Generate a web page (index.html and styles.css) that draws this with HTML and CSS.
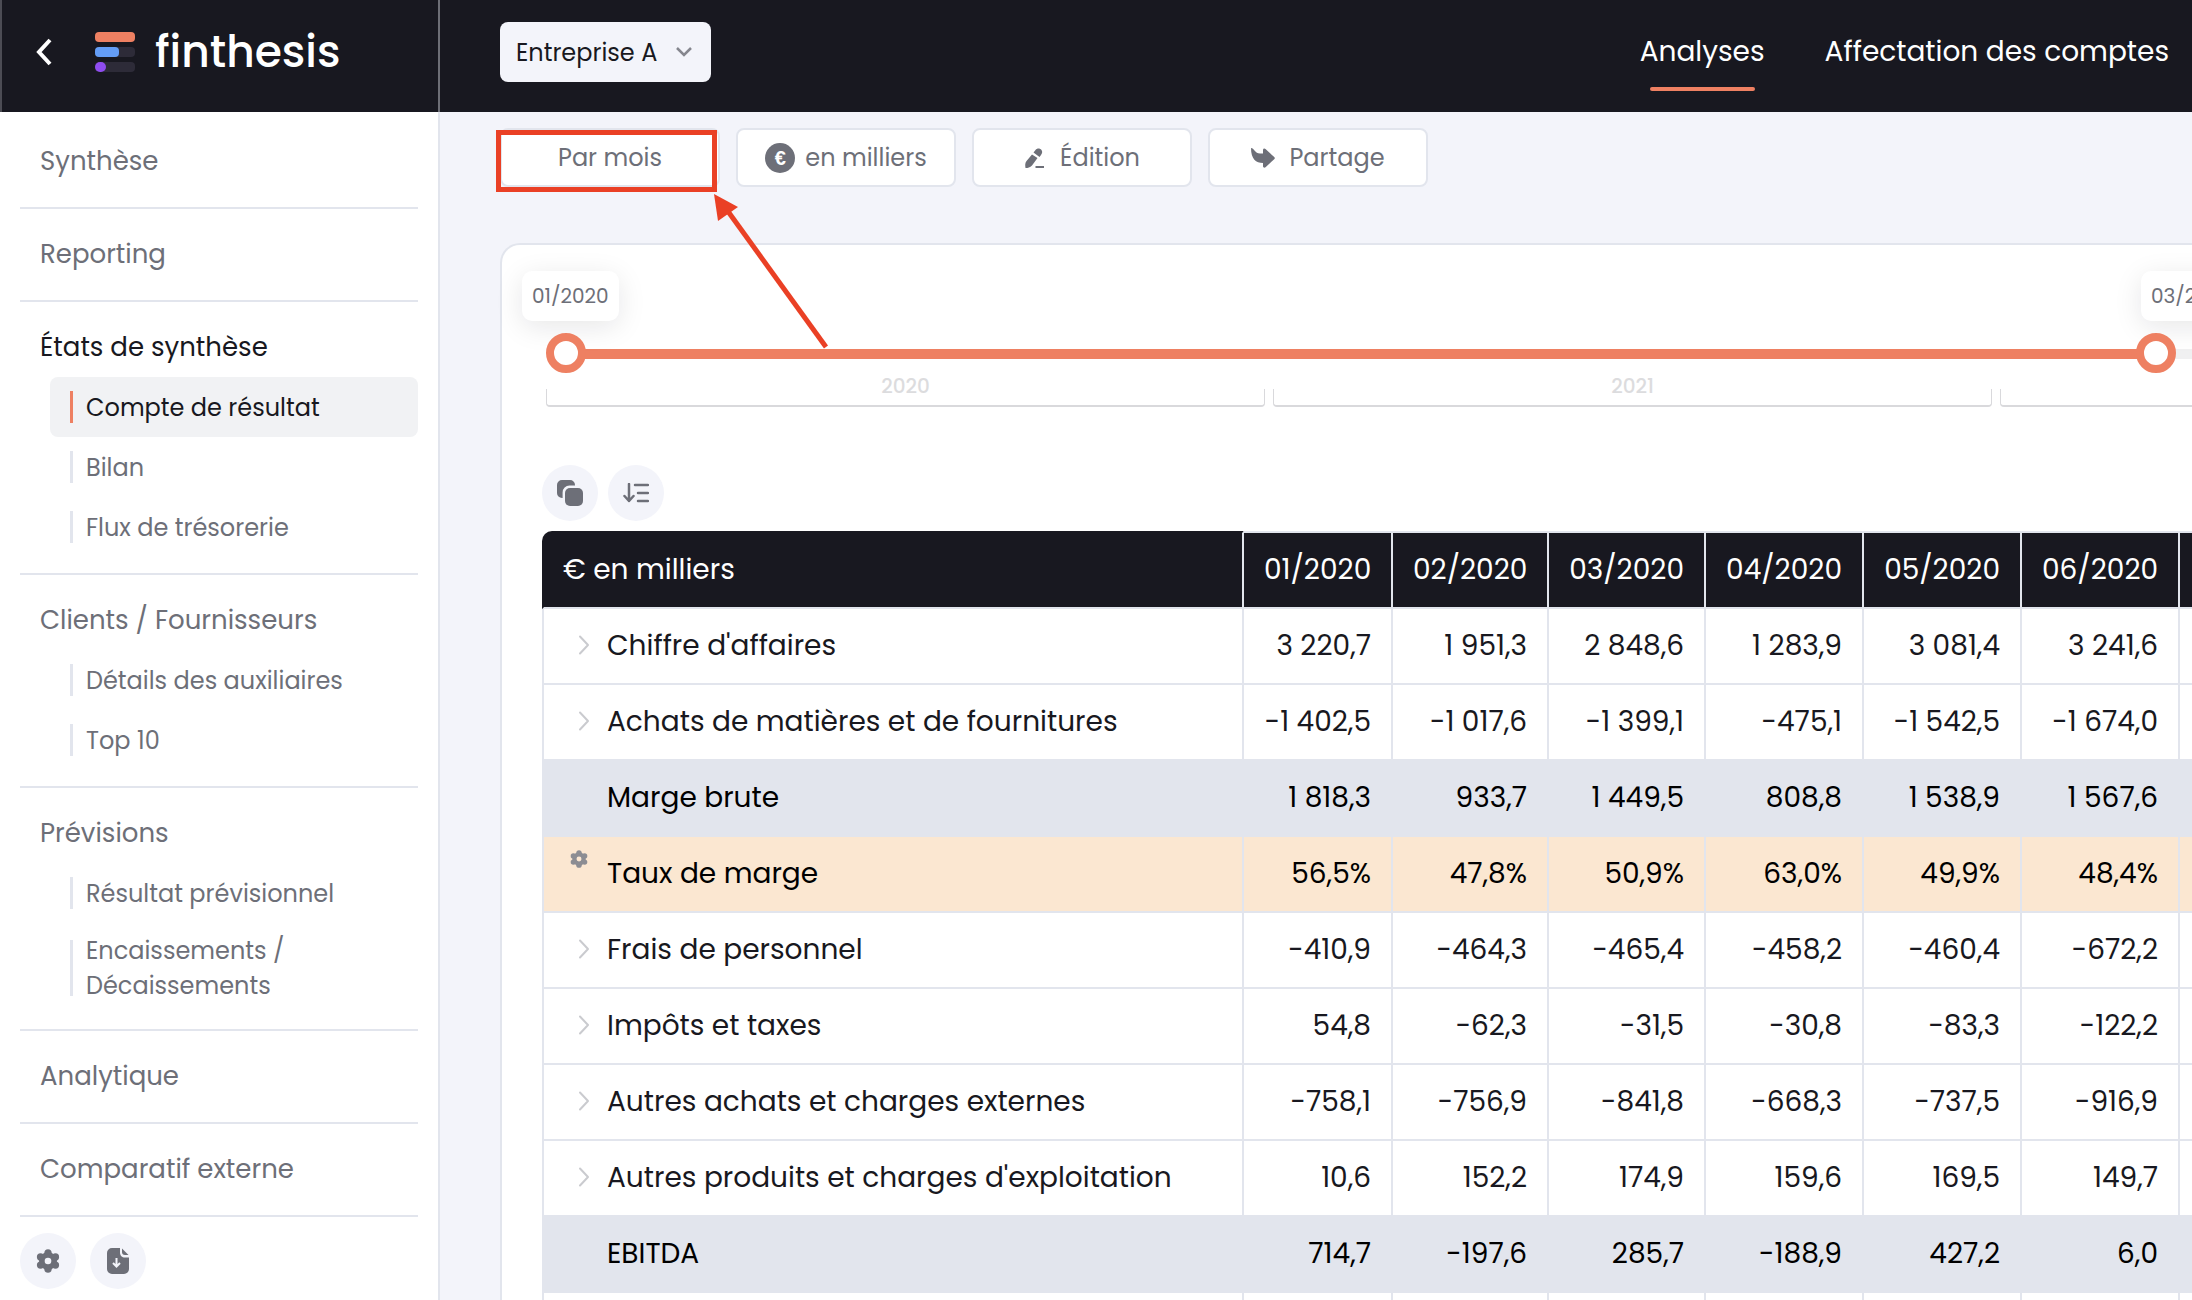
FILE: index.html
```html
<!DOCTYPE html>
<html lang="fr">
<head>
<meta charset="utf-8">
<meta name="viewport" content="width=device-width, initial-scale=1">
<title>finthesis</title>
<link rel="stylesheet" href="styles.css">
</head>
<body>
<svg class="sprite" aria-hidden="true">
  <mask id="gear-hole"><rect width="24" height="24" fill="#fff"/><circle cx="12" cy="12" r="3.300" fill="#000"/></mask>
  <symbol id="gear" viewBox="0 0 24 24">
    <g mask="url(#gear-hole)">
      <circle cx="12" cy="12" r="9"/>
      <circle cx="12" cy="3.800" r="3.600"/>
      <circle cx="19.500" cy="7.900" r="3.600"/>
      <circle cx="19.500" cy="16.100" r="3.600"/>
      <circle cx="12" cy="20.200" r="3.600"/>
      <circle cx="4.500" cy="16.100" r="3.600"/>
      <circle cx="4.500" cy="7.900" r="3.600"/>
    </g>
  </symbol>
  <symbol id="chevron" viewBox="0 0 12 20">
    <path d="M2 1.500 10 10l-8 8.500" fill="none" stroke="currentColor" stroke-width="2" stroke-linecap="round" stroke-linejoin="round"/>
  </symbol>
</svg>
<div class="app">
  <header class="topbar">
    <div class="brand">
      <button class="back" aria-label="Retour">
        <svg width="20" height="28" viewBox="0 0 20 28"><path d="M16 2 5 14l11 12" fill="none" stroke="#fff" stroke-width="4"/></svg>
      </button>
      <a class="logo" href="#">
        <svg width="40" height="40" viewBox="0 0 40 40">
          <rect width="40" height="10" rx="4" fill="#ee8062"/>
          <rect y="15" width="40" height="10" rx="4" fill="#2d2b38"/>
          <rect y="15" width="24" height="10" rx="4" fill="#649df6"/>
          <rect y="30" width="40" height="10" rx="4" fill="#2d2b38"/>
          <rect y="30" width="11" height="10" rx="5" fill="#8f4cf0"/>
        </svg>
        <span>finthesis</span>
      </a>
    </div>
    <div class="topbar-main">
      <div class="company">
        <select aria-label="Entreprise"><option>Entreprise A</option></select>
        <svg width="16" height="12" viewBox="0 0 16 12"><path d="m1 2 7 7 7-7" fill="none" stroke="#85868e" stroke-width="2.500"/></svg>
      </div>
      <nav class="tabs">
        <a class="tab tab-active" href="#">Analyses</a>
        <a class="tab" href="#">Affectation des comptes</a>
      </nav>
    </div>
  </header>

  <div class="body">
    <aside class="sidebar">
      <nav>
        <section class="group"><a class="group-title" href="#">Synthèse</a></section>
        <section class="group"><a class="group-title" href="#">Reporting</a></section>
        <section class="group">
          <a class="group-title current" href="#">États de synthèse</a>
          <a class="item item-active" href="#"><span>Compte de résultat</span></a>
          <a class="item" href="#"><span>Bilan</span></a>
          <a class="item" href="#"><span>Flux de trésorerie</span></a>
        </section>
        <section class="group">
          <a class="group-title" href="#">Clients / Fournisseurs</a>
          <a class="item" href="#"><span>Détails des auxiliaires</span></a>
          <a class="item" href="#"><span>Top 10</span></a>
        </section>
        <section class="group">
          <a class="group-title" href="#">Prévisions</a>
          <a class="item" href="#"><span>Résultat prévisionnel</span></a>
          <a class="item" href="#"><span>Encaissements /<br>Décaissements</span></a>
        </section>
        <section class="group"><a class="group-title" href="#">Analytique</a></section>
        <section class="group"><a class="group-title" href="#">Comparatif externe</a></section>
      </nav>
      <div class="rounds">
        <button class="round" aria-label="Paramètres"><svg width="24" height="24"><use href="#gear"/></svg></button>
        <button class="round" aria-label="Télécharger">
          <svg width="22" height="26" viewBox="0 0 22 26">
            <path d="M5 0h8v4.500C13 7.500 15 9.500 18 9.500h4V21a5 5 0 0 1-5 5H5a5 5 0 0 1-5-5V5a5 5 0 0 1 5-5z"/>
            <path d="M15 .5 21.500 7H18a3 3 0 0 1-3-3z"/>
            <path d="M9.500 10v8M6 15l3.500 3.500L13 15" fill="none" stroke="#f3f4fa" stroke-width="2"/>
          </svg>
        </button>
      </div>
    </aside>

    <main class="main">
      <div class="toolbar">
        <button class="tool tool-marked">Par mois
          <svg class="arrow" width="120" height="164" viewBox="0 0 120 164"><path d="M113 157 14 20" stroke="#ea4025" stroke-width="5"/><path d="M1 4 25 17 5 31z" fill="#ea4025"/></svg>
        </button>
        <button class="tool"><span class="euro">€</span>en milliers</button>
        <button class="tool tool-wide">
          <svg width="22" height="22" viewBox="0 0 22 22"><path d="M8 7.500 13.500 11 8 18.500C6 20.500 4 21 1.500 21 1 18 1 16 2.500 14zM9.500 5.500 11.500 3C13 1 16 1 17.500 3c1 1.500 1 3-.5 5l-1.500 2zM11.500 19H20v2h-8.500z"/></svg>
          Édition
        </button>
        <button class="tool tool-wide">
          <svg width="24" height="22" viewBox="1 0 24 22"><path d="M1 1c3 0 4 5.500 9 5.500h3V3c0-1.500 1.500-2 2.500-1l8.700 8c.8.700.8 1.600 0 2.300l-8.700 7.900c-1 .9-2.500.3-2.500-1V16C6 16 1 12 1 1z"/></svg>
          Partage
        </button>
      </div>

      <div class="card">
        <div class="slider">
          <div class="rail"><div class="fill"></div></div>
          <input class="range" type="range" min="0" max="100" value="0" aria-label="Début">
          <input class="range" type="range" min="0" max="100" value="99" aria-label="Fin">
          <output class="tip tip-start">01/2020</output>
          <output class="tip tip-end">03/2022</output>
        </div>
        <div class="years">
          <div class="year"><span>2020</span></div>
          <div class="year"><span>2021</span></div>
          <div class="year year-open"></div>
        </div>

        <div class="rounds">
          <button class="round" aria-label="Copier">
            <svg width="26" height="26" viewBox="0 0 26 26"><path d="M5 0h8a5 5 0 0 1 5 5v.6h-5.500A6.900 6.900 0 0 0 5.600 12.500V18H5a5 5 0 0 1-5-5V5a5 5 0 0 1 5-5z"/><rect x="8" y="8" width="18" height="18" rx="5"/></svg>
          </button>
          <button class="round" aria-label="Trier">
            <svg width="26" height="20" viewBox="0 0 26 20"><path d="M6 1v17M1.500 13 6 18l4.500-5M12 2h13M15 10h10M15 18h10" fill="none" stroke="currentColor" stroke-width="2.500" stroke-linecap="round" stroke-linejoin="round"/></svg>
          </button>
        </div>

        <table class="grid">
          <colgroup><col class="c-label"><col class="c-first"><col class="c-second"><col class="c-third"><col class="c"><col class="c"><col class="c"><col></colgroup>
          <thead>
            <tr><th scope="col">€ en milliers</th><th scope="col">01/2020</th><th scope="col">02/2020</th><th scope="col">03/2020</th><th scope="col">04/2020</th><th scope="col">05/2020</th><th scope="col">06/2020</th><td></td></tr>
          </thead>
          <tbody>
            <tr><th scope="row"><svg class="chev"><use href="#chevron"/></svg>Chiffre d'affaires</th><td>3 220,7</td><td>1 951,3</td><td>2 848,6</td><td>1 283,9</td><td>3 081,4</td><td>3 241,6</td><td></td></tr>
            <tr><th scope="row"><svg class="chev"><use href="#chevron"/></svg>Achats de matières et de fournitures</th><td>-1 402,5</td><td>-1 017,6</td><td>-1 399,1</td><td>-475,1</td><td>-1 542,5</td><td>-1 674,0</td><td></td></tr>
            <tr class="total"><th scope="row">Marge brute</th><td>1 818,3</td><td>933,7</td><td>1 449,5</td><td>808,8</td><td>1 538,9</td><td>1 567,6</td><td></td></tr>
            <tr class="ratio"><th scope="row"><svg class="cog"><use href="#gear"/></svg>Taux de marge</th><td>56,5%</td><td>47,8%</td><td>50,9%</td><td>63,0%</td><td>49,9%</td><td>48,4%</td><td></td></tr>
            <tr><th scope="row"><svg class="chev"><use href="#chevron"/></svg>Frais de personnel</th><td>-410,9</td><td>-464,3</td><td>-465,4</td><td>-458,2</td><td>-460,4</td><td>-672,2</td><td></td></tr>
            <tr><th scope="row"><svg class="chev"><use href="#chevron"/></svg>Impôts et taxes</th><td>54,8</td><td>-62,3</td><td>-31,5</td><td>-30,8</td><td>-83,3</td><td>-122,2</td><td></td></tr>
            <tr><th scope="row"><svg class="chev"><use href="#chevron"/></svg>Autres achats et charges externes</th><td>-758,1</td><td>-756,9</td><td>-841,8</td><td>-668,3</td><td>-737,5</td><td>-916,9</td><td></td></tr>
            <tr><th scope="row"><svg class="chev"><use href="#chevron"/></svg>Autres produits et charges d'exploitation</th><td>10,6</td><td>152,2</td><td>174,9</td><td>159,6</td><td>169,5</td><td>149,7</td><td></td></tr>
            <tr class="total"><th scope="row">EBITDA</th><td>714,7</td><td>-197,6</td><td>285,7</td><td>-188,9</td><td>427,2</td><td>6,0</td><td></td></tr>
            <tr><td></td><td></td><td></td><td></td><td></td><td></td><td></td><td></td></tr>
          </tbody>
        </table>
      </div>
    </main>
  </div>
</div>
</body>
</html>
```
FILE: styles.css
```css
:root {
  --dark: #181820;
  --grey: #6d6f78;
  --line: #e2e5ed;
  --pale: #f3f4fa;
  --orange: #ee8062;
  --mark: #ea4025;
}

* { box-sizing: border-box; }

body {
  margin: 0;
  background: var(--pale);
  color: var(--dark);
  font-family: Poppins, Inter, sans-serif;
  font-size: 24px;
}

a { color: inherit; text-decoration: none; }

button, select {
  border: 0;
  padding: 0;
  background: none;
  color: inherit;
  font: inherit;
}

.sprite {
  position: absolute;
  width: 0;
  height: 0;
}

.app {
  display: flex;
  flex-direction: column;
  height: 100vh;
  overflow: hidden;
}

/* Top bar */
.topbar {
  display: flex;
  flex: none;
  height: 112px;
  background: var(--dark);
  color: #fff;
}

.brand {
  display: flex;
  align-items: center;
  gap: 41px;
  width: 440px;
  padding: 0 0 8px 32px;
  border-left: 2px solid #4c4c54;
  border-right: 2px solid #6d6e76;
}

.back { display: flex; }

.logo {
  display: flex;
  align-items: center;
  gap: 20px;
  font-size: 44px;
  font-weight: 500;
  line-height: 56px;
}

.topbar-main {
  display: flex;
  flex: 1;
  align-items: center;
  justify-content: space-between;
  padding: 0 23px 8px 60px;
}

.company {
  display: grid;
  align-items: center;
  width: 211px;
}

.company > * { grid-area: 1 / 1; }

.company select {
  appearance: none;
  width: 100%;
  height: 60px;
  padding: 0 44px 0 16px;
  border-radius: 8px;
  background: var(--pale);
  color: var(--dark);
}

.company svg {
  justify-self: end;
  margin-right: 19px;
  pointer-events: none;
}

.tabs {
  display: flex;
  gap: 60px;
  font-size: 28px;
  line-height: 40px;
}

.tab { position: relative; }

.tab-active::after {
  content: "";
  position: absolute;
  inset: auto 10px -19px;
  height: 4px;
  border-radius: 2px;
  background: var(--orange);
}

.body {
  display: flex;
  flex: 1;
  min-height: 0;
}

/* Sidebar */
.sidebar {
  flex: none;
  width: 440px;
  padding: 4px 20px 0;
  border-right: 2px solid var(--line);
  background: #fff;
  color: var(--grey);
}

.group {
  padding-bottom: 16px;
  border-bottom: 2px solid var(--line);
}

.group-title {
  display: block;
  padding: 25px 20px 10px;
  font-size: 26px;
  line-height: 40px;
}

.current, .item-active { color: var(--dark); }

.item {
  display: block;
  margin-left: 30px;
  padding: 10px 20px;
  border-radius: 8px;
  line-height: 35px;
}

.item span {
  display: flex;
  align-items: center;
  min-height: 40px;
  padding-left: 16px;
  background: linear-gradient(var(--line), var(--line)) left center / 3px 80% no-repeat;
}

.item-active { background: #f1f2f4; }

.item-active span { background-image: linear-gradient(var(--orange), var(--orange)); }

.rounds {
  display: flex;
  gap: 10px;
}

.sidebar .rounds {
  gap: 14px;
  padding-top: 16px;
}

.round {
  display: flex;
  align-items: center;
  justify-content: center;
  width: 56px;
  height: 56px;
  border-radius: 50%;
  background: var(--pale);
  color: var(--grey);
}

.round svg, .tool svg { fill: currentColor; }

/* Content */
.main {
  display: flex;
  flex: 1;
  flex-direction: column;
  gap: 56px;
  min-width: 0;
  padding: 16px 0 0 60px;
}

.toolbar {
  display: flex;
  gap: 16px;
}

.tool {
  display: flex;
  align-items: center;
  justify-content: center;
  gap: 10px;
  width: 220px;
  height: 59px;
  border: 2px solid var(--line);
  border-radius: 8px;
  background: #fff;
  color: var(--grey);
}

.tool-wide { gap: 14px; }

.tool-marked { position: relative; }

.tool-marked::after {
  content: "";
  position: absolute;
  inset: 0 1px -7px -6px;
  border: 5px solid var(--mark);
}

.tool .arrow {
  position: absolute;
  z-index: 2;
  top: 60px;
  left: 211px;
}

.euro {
  width: 30px;
  height: 30px;
  border-radius: 50%;
  background: var(--grey);
  color: #fff;
  font-family: "Liberation Sans", sans-serif;
  font-size: 20px;
  font-weight: 700;
  line-height: 30px;
}

.card {
  flex: none;
  padding: 26px 0 0 40px;
  border: 2px solid var(--line);
  border-right: 0;
  border-radius: 20px 0 0 0;
  background: #fff;
}

/* Period slider */
.slider {
  position: relative;
  display: grid;
  margin-left: 4px;
  padding-top: 62px;
}

.slider > .rail, .slider > .range { grid-area: 1 / 1; }

.rail {
  align-self: center;
  height: 10px;
  margin: 2px 0 0 20px;
  background: #f0f0f1;
}

.fill {
  width: 98%;
  height: 10px;
  background: var(--orange);
}

.range {
  appearance: none;
  z-index: 1;
  width: 100%;
  height: 40px;
  margin: 0;
  background: none;
  pointer-events: none;
}

.range::-webkit-slider-thumb {
  appearance: none;
  width: 40px;
  height: 40px;
  border: 8px solid var(--orange);
  border-radius: 50%;
  background: #fff;
  pointer-events: auto;
}

.tip {
  position: absolute;
  top: 0;
  width: 97px;
  padding-left: 10px;
  border-radius: 10px;
  background: #fff;
  box-shadow: 0 6px 28px rgba(24, 24, 32, .1);
  color: var(--grey);
  font-size: 20px;
  line-height: 50px;
}

.tip-start { left: -24px; }
.tip-end { right: -46px; }

.years {
  display: grid;
  grid-template-columns: 45fr 45fr 12fr;
  gap: 8px;
  height: 34px;
  margin: 0 0 58px 4px;
  color: #dcdcde;
  font-size: 20px;
  font-weight: 500;
  line-height: 26px;
  text-align: center;
}

.year { display: grid; }

.year span { grid-area: 1 / 1; }

/* Bracket under each year */
.year::before {
  content: "";
  grid-area: 1 / 1;
  align-self: end;
  height: 16px;
  border: solid #d9d9dc;
  border-width: 0 1px 2px;
  border-radius: 0 0 4px 4px;
}

.year-open::before {
  border-right: 0;
  border-bottom-right-radius: 0;
}

/* Table */
.grid {
  width: 100%;
  margin-top: 10px;
  border-spacing: 0;
  table-layout: fixed;
  font-size: 28px;
  white-space: nowrap;
}

.c-label { width: 702px; }
.c-first { width: 149px; }
.c-second { width: 156px; }
.c-third { width: 157px; }
.c { width: 158px; }

.grid th, .grid td {
  height: 76px;
  padding: 0 20px;
  border: solid var(--line);
  border-width: 0 2px 2px 0;
  font-weight: 400;
  text-align: right;
}

.grid tr > :first-child {
  border-left-width: 2px;
  text-align: left;
}

.grid tr > :last-child { border-right-width: 0; }

.grid thead th, .grid thead td {
  height: 78px;
  border-top-width: 2px;
  background: var(--dark);
  color: #fff;
}

.grid thead th:first-child {
  padding-left: 19px;
  border-top-color: var(--dark);
  border-left-color: var(--dark);
  border-top-left-radius: 10px;
}

.grid tbody th {
  position: relative;
  padding-left: 63px;
}

.grid .total > * { background: var(--line); color: #000; }

.grid .ratio > * { background: #fbe7d1; color: #000; }

.chev {
  position: absolute;
  top: 26px;
  left: 34px;
  width: 12px;
  height: 20px;
  color: #cacbcf;
}

.cog {
  position: absolute;
  top: 13px;
  left: 26px;
  width: 18px;
  height: 18px;
  fill: #8c8d93;
}
```
